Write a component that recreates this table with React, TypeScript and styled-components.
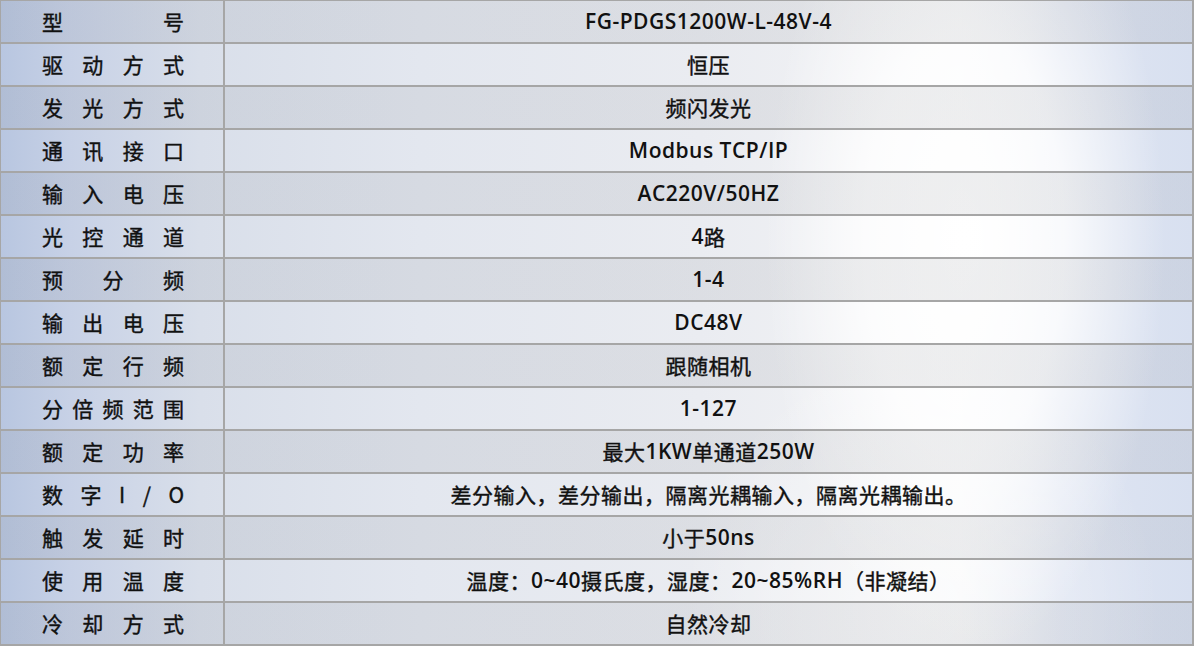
import React from "react";
import styled, { createGlobalStyle, css } from "styled-components";

const GlobalStyle = createGlobalStyle`
  html, body { margin: 0; padding: 0; background: #a6a6a6; overflow: hidden; }
  body { font-family: "Open Sans", "Noto Sans CJK SC", sans-serif; }
`;

const rows: { label: string[]; value: string }[] = [
  { label: ["型", "号"], value: "FG-PDGS1200W-L-48V-4" },
  { label: ["驱", "动", "方", "式"], value: "恒压" },
  { label: ["发", "光", "方", "式"], value: "频闪发光" },
  { label: ["通", "讯", "接", "口"], value: "Modbus TCP/IP" },
  { label: ["输", "入", "电", "压"], value: "AC220V/50HZ" },
  { label: ["光", "控", "通", "道"], value: "4路" },
  { label: ["预", "分", "频"], value: "1-4" },
  { label: ["输", "出", "电", "压"], value: "DC48V" },
  { label: ["额", "定", "行", "频"], value: "跟随相机" },
  { label: ["分", "倍", "频", "范", "围"], value: "1-127" },
  { label: ["额", "定", "功", "率"], value: "最大1KW单通道250W" },
  { label: ["数", "字", "I", "/", "O"], value: "差分输入，差分输出，隔离光耦输入，隔离光耦输出。" },
  { label: ["触", "发", "延", "时"], value: "小于50ns" },
  { label: ["使", "用", "温", "度"], value: "温度：0~40摄氏度，湿度：20~85%RH（非凝结）" },
  { label: ["冷", "却", "方", "式"], value: "自然冷却" },
];

const backdrop = `
  radial-gradient(ellipse 200px 420px at 965px 240px, rgba(255,255,255,1) 0%, rgba(255,255,255,0.8) 50%, rgba(255,255,255,0) 100%),
  radial-gradient(ellipse 240px 260px at 920px 610px, rgba(255,255,255,0.6) 0%, rgba(255,255,255,0) 100%),
  linear-gradient(90deg, #b8c6e0 0px, #c7d1e6 70px, #d9dfea 200px, #e3e7ef 420px, #eaecf1 700px, #f0f1f4 860px, #f5f6f8 960px, #dfe5f2 1060px, #d8e0f0 1194px)
`;

const cellBg = css<{ $odd: boolean }>`
  background: ${(p) =>
    p.$odd
      ? `linear-gradient(rgba(120,124,132,0.12), rgba(120,124,132,0.12)), ${backdrop}`
      : backdrop};
  background-attachment: fixed;
`;

const Table = styled.div`
  display: grid;
  grid-template-columns: 222px 967px;
  grid-auto-rows: 41px;
  gap: 2px;
  padding: 1px 2px 2px 1px;
  width: 1194px;
  height: 646px;
  box-sizing: border-box;
  background: #a6a6a6;
`;

const LabelCell = styled.div<{ $odd: boolean }>`
  ${cellBg};
  display: flex;
  align-items: center;
  padding-left: 41px;
`;

const LabelText = styled.div`
  width: 142px;
  display: flex;
  justify-content: space-between;
  font-family: "Noto Sans CJK SC", sans-serif;
  font-size: 21px;
  font-weight: 400;
  -webkit-text-stroke: 0.4px #111;
  color: #111;
  line-height: 1;
`;

const ValueCell = styled.div<{ $odd: boolean }>`
  ${cellBg};
  display: flex;
  align-items: center;
  justify-content: center;
  font-family: "Noto Sans CJK SC", sans-serif;
  font-size: 21px;
  font-weight: 400;
  letter-spacing: 0.5px;
  color: #111;
  line-height: 1;
  white-space: pre;
`;

const Cjk = styled.span`
  -webkit-text-stroke: 0.4px #111;
`;

const Latin = styled.span`
  font-family: "Open Sans", sans-serif;
  font-weight: 600;
`;

function splitRuns(text: string) {
  const parts = text.match(/[\x20-\x7e]+|[^\x20-\x7e]+/g) || [];
  return parts.map((p, i) =>
    /^[\x20-\x7e]+$/.test(p) ? <Latin key={i}>{p}</Latin> : <Cjk key={i}>{p}</Cjk>
  );
}

export default function App() {
  return (
    <>
      <GlobalStyle />
      <Table>
        {rows.map((r, i) => (
          <React.Fragment key={i}>
            <LabelCell $odd={i % 2 === 0}>
              <LabelText>
                {r.label.map((c, j) => (
                  <span key={j}>{c}</span>
                ))}
              </LabelText>
            </LabelCell>
            <ValueCell $odd={i % 2 === 0}>{splitRuns(r.value)}</ValueCell>
          </React.Fragment>
        ))}
      </Table>
    </>
  );
}
